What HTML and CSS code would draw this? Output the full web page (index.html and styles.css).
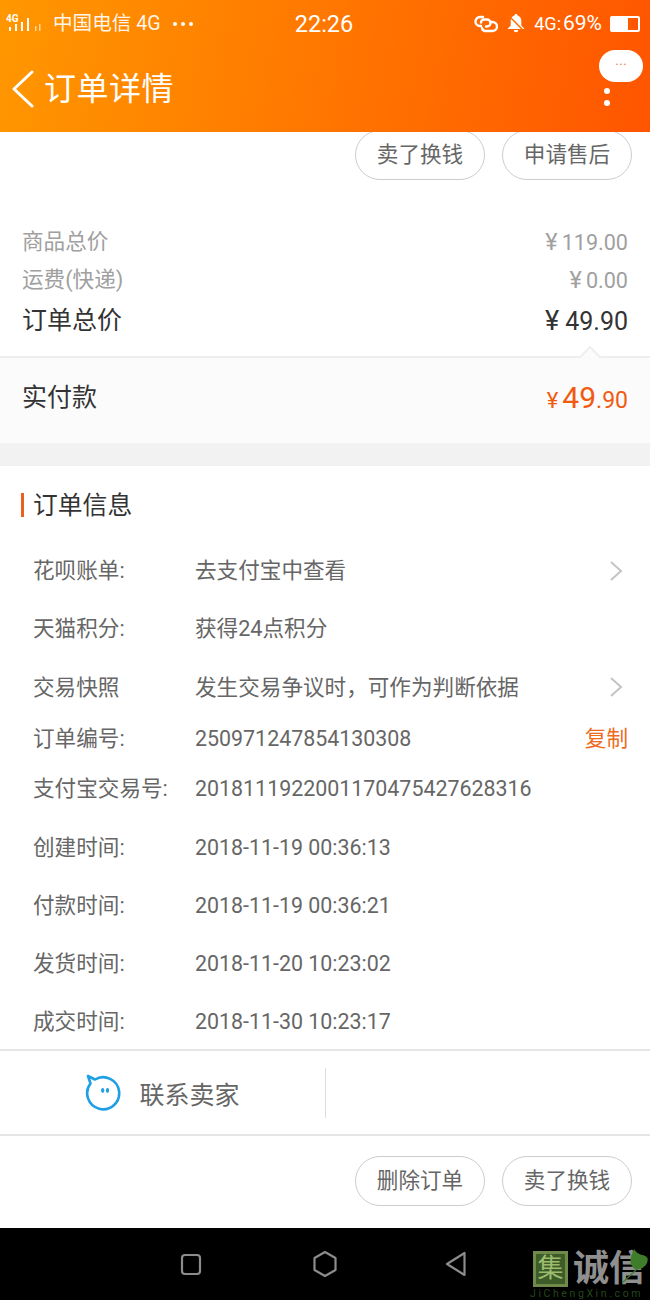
FILE: index.html
```html
<!DOCTYPE html>
<html lang="zh">
<head>
    <meta charset="utf-8">
    <title>订单详情</title>
    <link rel="stylesheet" href="styles.css">
</head>
<body>
    <header class="top">
        <div class="status">
            <div class="status-left">
                <svg class="signal" width="38" height="20" viewBox="0 0 38 20">
                    <text x="0" y="8" class="signal-tag">4G</text>
                    <g fill="#fff">
                        <rect x="3" y="13" width="2" height="4"/>
                        <rect x="9" y="10" width="2" height="7"/>
                        <rect x="15" y="8" width="2" height="9"/>
                        <rect x="21" y="4" width="2" height="13"/>
                        <rect x="29" y="12" width="1.5" height="5" opacity=".6"/>
                        <rect x="33" y="10" width="1.5" height="7" opacity=".6"/>
                    </g>
                </svg>
                <span class="carrier">中国电信 4G</span>
                <span class="status-dots"><i></i><i></i><i></i></span>
            </div>
            <div class="clock">22:26</div>
            <div class="status-right">
                <svg width="24" height="18" viewBox="0 0 24 18" fill="none" stroke="#fff" stroke-width="2.4" stroke-linecap="round">
                    <path d="M9 2H6a4.500 4.500 0 0 0 0 9h1"/>
                    <path d="M7 7.500a3 3 0 0 1 3-3h3a3.500 3.500 0 0 1 0 7h-1"/>
                    <path d="M17 7h1.500a4 4 0 0 1 0 9H11a3.500 3.500 0 0 1-3-3"/>
                </svg>
                <svg class="bell" width="18" height="20" viewBox="0 0 18 20">
                    <path fill="#fff" d="M9 0c1 0 1.500.7 1.500 1.600C13 2.300 14.300 4.500 14.300 7v4.500L17.500 15H.5l3.200-3.500V7c0-2.500 1.300-4.700 3.800-5.400C7.500.7 8 0 9 0zM6.800 16h4.400a2.200 2.200 0 0 1-4.400 0z"/>
                    <path stroke="#fb6f00" stroke-width="1.500" d="M2 2l14 14"/>
                </svg>
                <span class="net">4G<b>:</b></span>
                <span class="percent">69%</span>
                <span class="battery"></span>
            </div>
        </div>
        <div class="nav">
            <svg class="back" width="24" height="38" viewBox="0 0 24 38" fill="none" stroke="#fff" stroke-width="3" stroke-linecap="round" stroke-linejoin="round">
                <path d="M21 2L3 19l18 17"/>
            </svg>
            <span class="nav-title">订单详情</span>
            <div class="more">
                <span class="more-bubble">···</span>
                <i></i>
                <i></i>
            </div>
        </div>
    </header>

    <main>
        <div class="btn-row btn-row-top">
            <a class="btn">卖了换钱</a>
            <a class="btn">申请售后</a>
        </div>

        <section class="prices">
            <div class="price-row muted"><span>商品总价</span><span><em>¥</em>119.00</span></div>
            <div class="price-row muted"><span>运费(快递)</span><span><em>¥</em>0.00</span></div>
            <div class="price-row total"><span>订单总价</span><span><em>¥</em>49.90</span></div>
        </section>

        <section class="paid">
            <span class="caret"></span>
            <span>实付款</span>
            <span class="paid-sum"><em>¥</em><strong>49</strong>.90</span>
        </section>

        <section class="info">
            <h2 class="info-title">订单信息</h2>
            <div class="info-row h58"><span class="info-label">花呗账单:</span><span class="info-value">去支付宝中查看</span><svg class="chev" width="14" height="22" viewBox="0 0 14 22"><path d="M2 2l10 9-10 9"/></svg></div>
            <div class="info-row h58"><span class="info-label">天猫积分:</span><span class="info-value">获得24点积分</span></div>
            <div class="info-row h58"><span class="info-label">交易快照</span><span class="info-value">发生交易争议时，可作为判断依据</span><svg class="chev" width="14" height="22" viewBox="0 0 14 22"><path d="M2 2l10 9-10 9"/></svg></div>
            <div class="info-row h46"><span class="info-label">订单编号:</span><span class="info-value num">250971247854130308</span><a class="copy">复制</a></div>
            <div class="info-row h54"><span class="info-label">支付宝交易号:</span><span class="info-value num">2018111922001170475427628316</span></div>
            <div class="info-row h58"><span class="info-label">创建时间:</span><span class="info-value num">2018-11-19 00:36:13</span></div>
            <div class="info-row h58"><span class="info-label">付款时间:</span><span class="info-value num">2018-11-19 00:36:21</span></div>
            <div class="info-row h58"><span class="info-label">发货时间:</span><span class="info-value num">2018-11-20 10:23:02</span></div>
            <div class="info-row h58"><span class="info-label">成交时间:</span><span class="info-value num">2018-11-30 10:23:17</span></div>
        </section>

        <section class="contact">
            <div class="contact-cell">
                <svg width="36" height="37" viewBox="0 0 36 37" fill="none">
                    <path stroke="#1f9fe6" stroke-width="2.600" stroke-linejoin="round" d="M10 5.500A16 16 0 1 1 5.500 9.500L3 2z"/>
                    <ellipse cx="17.700" cy="16.500" rx="1.600" ry="2.400" fill="#1f9fe6"/>
                    <ellipse cx="22.500" cy="16.500" rx="1.600" ry="2.400" fill="#1f9fe6"/>
                </svg>
                <span class="contact-text">联系卖家</span>
            </div>
            <div class="contact-cell"></div>
        </section>

        <div class="btn-row btn-row-bottom">
            <a class="btn">删除订单</a>
            <a class="btn">卖了换钱</a>
        </div>
    </main>

    <footer class="sysbar">
        <svg class="sys-square" width="22" height="24" viewBox="0 0 22 24" fill="none" stroke="#8c8c8c" stroke-width="2.200" stroke-linejoin="round"><rect x="2" y="3" width="18" height="19" rx="3"/></svg>
        <svg class="sys-home" width="26" height="28" viewBox="0 0 26 28" fill="none" stroke="#8c8c8c" stroke-width="2.200" stroke-linejoin="round"><path d="M13 2l10.500 6v12L13 26 2.500 20V8z"/></svg>
        <svg class="sys-back" width="22" height="26" viewBox="0 0 22 26" fill="none" stroke="#8c8c8c" stroke-width="2.200" stroke-linejoin="round"><path d="M19.500 2v22L2 13z"/></svg>
        <div class="mark">
            <div class="mark-top"><span class="mark-box">集</span><span class="mark-name">诚信</span></div>
            <div class="mark-url">JiChengXin.com</div>
            <svg class="leaf" width="28" height="36" viewBox="0 0 28 36"><path fill="#3f7d2a" d="M12 0c2 3 4 5 8 6 5 1 7 3 5 8-2 4-6 6-11 7-4-3-7-7-5-12 0-3 2-6 3-9z"/><path stroke="#3f7d2a" stroke-width="1.200" fill="none" d="M14 21L0 34"/></svg>
        </div>
    </footer>
</body>
</html>
```

FILE: styles.css
```css
* {
    box-sizing: border-box;
}
html, body {
    margin: 0;
    padding: 0;
}
body {
    width: 650px;
    height: 1300px;
    overflow: hidden;
    background-color: #fff;
    font-family: Roboto, "Noto Sans CJK SC", sans-serif;
    font-size: 21.6px;
    line-height: 1.2;
    color: #333;
    display: flex;
    flex-direction: column;
}
em {
    font-style: normal;
}

/* barra do topo */
.top {
    position: relative;
    z-index: 2;
    height: 132px;
    flex: none;
    color: #fff;
    background: linear-gradient(100deg, #ff9700 0%, #ff7a00 45%, #ff5500 100%);
}
.status {
    height: 46px;
    padding: 2px 10px 0 6px;
    display: grid;
    grid-template-columns: 1fr auto 1fr;
    align-items: center;
}
.status-left, .status-right {
    display: flex;
    align-items: center;
}
.status-right {
    justify-content: flex-end;
}
.signal-tag {
    font-size: 10px;
    font-weight: 700;
    fill: #fff;
}
.carrier {
    margin-left: 9px;
    font-size: 19.6px;
    opacity: .92;
}
.status-dots {
    display: flex;
    gap: 4px;
    margin-left: 12px;
}
.status-dots i {
    width: 4px;
    height: 4px;
    border-radius: 50%;
    background-color: #fff;
}
.clock {
    margin-left: 2px;
    font-size: 23.5px;
}
.bell {
    margin-left: 9px;
}
.net {
    margin-left: 9px;
    font-size: 18px;
}
.net b {
    font-weight: 400;
}
.percent {
    margin-left: 2px;
    font-size: 21px;
}
.battery {
    margin-left: 8px;
    width: 30px;
    height: 16px;
    border-radius: 2px;
    background: linear-gradient(to right, #fff 60%, transparent 60%);
    border: 2px solid #fff;
    display: block;
}
.nav {
    height: 86px;
    padding-left: 11px;
    display: flex;
    align-items: center;
    position: relative;
}
.back {
    margin-top: -1px;
}
.nav-title {
    margin-left: 9px;
    font-size: 32px;
    letter-spacing: .5px;
}
.more {
    position: absolute;
    right: 7px;
    top: 4px;
    width: 44px;
    display: flex;
    flex-direction: column;
    align-items: flex-start;
    gap: 6px;
}
.more i {
    width: 6px;
    height: 6px;
    margin-left: 5px;
    border-radius: 50%;
    background-color: #fff;
}
.more-bubble {
    width: 44px;
    height: 32px;
    border-radius: 16px;
    background-color: #fff;
    color: #f08a5a;
    font-size: 15px;
    line-height: 30px;
    text-align: center;
}

/* botoes */
.btn-row {
    display: flex;
    justify-content: flex-end;
    gap: 17px;
    padding-right: 18px;
}
.btn-row-top {
    height: 48px;
    align-items: flex-end;
}
.btn-row-bottom {
    flex: 1;
    align-items: center;
    padding-bottom: 2px;
}
.btn {
    width: 130px;
    height: 50px;
    flex: none;
    border: 1.500px solid #ccc;
    border-radius: 25px;
    color: #666;
    display: flex;
    align-items: center;
    justify-content: center;
}
main {
    flex: 1;
    display: flex;
    flex-direction: column;
    min-height: 0;
}

/* precos */
.prices {
    padding: 43px 22px 0;
    height: 176px;
}
.price-row {
    display: flex;
    justify-content: space-between;
    align-items: center;
    height: 38px;
}
.price-row em {
    margin-right: 4px;
    font-size: 23.5px;
}
.muted {
    color: #a0a0a0;
}
.total {
    height: 44px;
    font-size: 25px;
    color: #333;
}
.total em {
    margin-right: 6px;
    font-size: 27px;
}
.paid {
    position: relative;
    height: 110px;
    padding: 0 22px 6px 22px;
    border-top: 2px solid #eee;
    border-bottom: 23px solid #f2f2f2;
    background-color: #fbfbfb;
    font-size: 25px;
    display: flex;
    align-items: center;
    justify-content: space-between;
}
.paid-sum {
    color: #f15a11;
    font-size: 23px;
}
.paid-sum strong {
    font-size: 30px;
    font-weight: 400;
}
.paid-sum em {
    margin-right: 4px;
    font-size: 22px;
}
.caret {
    position: absolute;
    right: 52px;
    top: -9px;
    width: 16px;
    height: 16px;
    background-color: #fbfbfb;
    border-top: 2px solid #eee;
    border-left: 2px solid #eee;
    transform: rotate(45deg);
}

/* informacoes */
.info {
    height: 585px;
    padding-top: 25px;
    border-bottom: 2px solid #e5e5e5;
}
.info-title {
    margin: 0 0 21px 21px;
    padding-left: 12px;
    height: 30px;
    line-height: 30px;
    font-size: 24.8px;
    font-weight: 400;
    color: #333;
    position: relative;
}
.info-title::before {
    content: "";
    position: absolute;
    left: 0;
    top: 2px;
    width: 3px;
    height: 24px;
    background-color: #e8621e;
}
.info-row {
    display: flex;
    align-items: center;
    padding: 0 22px 0 33px;
    color: #666;
}
.h58 {
    height: 58.200px;
}
.h46 {
    height: 45px;
}
.h54 {
    height: 54px;
    margin-bottom: 3px;
}
.info-label {
    width: 162px;
    flex: none;
}
.info-value {
    flex: 1;
}
.num {
    font-size: 21.4px;
}
.chev {
    margin-right: 5px;
    fill: none;
    stroke: #c4c4c4;
    stroke-width: 2;
}
.copy {
    color: #ee6a1c;
}

/* contato */
.contact {
    height: 85px;
    border-bottom: 2px solid #e5e5e5;
    display: flex;
    align-items: center;
}
.contact-cell {
    flex: 1;
    height: 50px;
    font-size: 25px;
    color: #666;
    display: flex;
    align-items: center;
    justify-content: center;
    gap: 18px;
}
.contact-cell:first-child {
    flex: none;
    width: 326px;
    border-right: 1px solid #ddd;
}
.contact-text {
    padding-top: 6px;
}

/* barra do sistema */
.sysbar {
    position: relative;
    height: 72px;
    flex: none;
    background-color: #000;
    padding-left: 180px;
    display: flex;
    align-items: center;
}
.sys-home {
    margin-left: 110px;
}
.sys-back {
    margin-left: 107px;
}
.mark {
    position: absolute;
    left: 530px;
    top: 23px;
    width: 120px;
}
.mark-top {
    margin-left: 3px;
    height: 36px;
    display: flex;
    align-items: center;
    gap: 5px;
}
.mark-box {
    width: 35px;
    height: 36px;
    border: 3px solid #6f8a4a;
    background-color: #3d5c28;
    color: #9dbb6f;
    font-size: 26px;
    line-height: 28px;
    text-align: center;
}
.mark-name {
    font-size: 36px;
    line-height: 36px;
    font-weight: 700;
    color: #8f8f8f;
    white-space: nowrap;
}
.mark-url {
    margin-top: 1px;
    font-size: 10.5px;
    line-height: 12px;
    letter-spacing: 2.600px;
    color: #24481c;
    white-space: nowrap;
}
.leaf {
    position: absolute;
    left: 92px;
    top: -2px;
}
```
